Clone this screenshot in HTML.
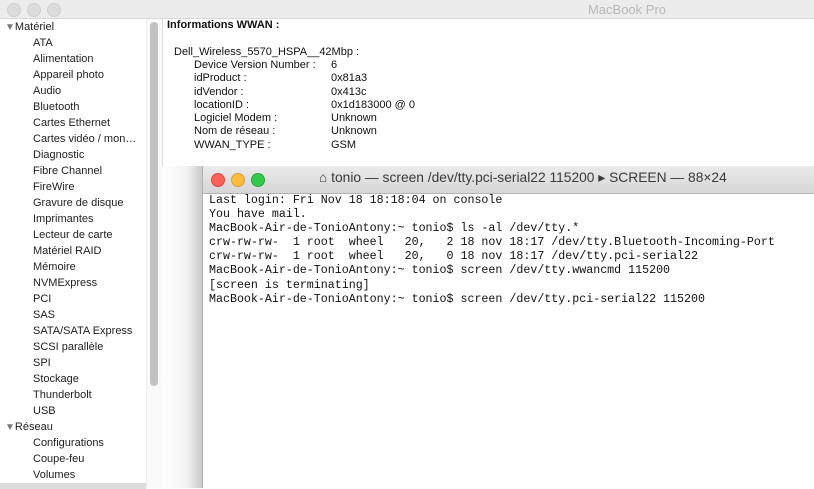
<!DOCTYPE html>
<html><head><meta charset="utf-8"><style>
body{margin:0;width:814px;height:488px;overflow:hidden;position:relative;background:#fff;font-family:"Liberation Sans",sans-serif;}
.tb{position:absolute;left:0;top:0;width:814px;height:18px;background:#ececec;border-bottom:1px solid #d8d8d8;}
.tb .d{position:absolute;top:3px;width:12px;height:12px;border-radius:50%;background:#dcdcdc;border:0.5px solid #d0d0d0;}
.tb .t{position:absolute;left:0;right:0;top:2px;text-align:center;color:#b8b8b8;font-size:13px;padding-left:440px;}
.side{position:absolute;left:0;top:21px;width:146px;height:467px;background:#fff;}
.side div{position:absolute;font-size:11px;color:#222;white-space:nowrap;}
.track{position:absolute;left:146px;top:19px;width:15px;height:469px;background:#fafafa;border-left:1px solid #eee;border-right:1px solid #ddd;}
.thumb{position:absolute;left:150px;top:22px;width:8px;height:364px;background:#c2c2c2;border-radius:4px;}
.info{position:absolute;font-size:11px;color:#111;white-space:nowrap;}
.shadow{position:absolute;left:162px;top:166px;width:41px;height:322px;background:linear-gradient(90deg,#fff 0%,#f2f2f2 60%,#c8c8c8 100%);}
.term{position:absolute;left:202px;top:166px;width:612px;height:322px;background:#fff;border-left:1px solid #b0b0b0;}
.ttb{position:absolute;left:0;top:0;width:612px;height:27px;background:linear-gradient(#ebebeb,#d6d6d6);border-bottom:1px solid #b5b5b5;}
.ttb .c{position:absolute;top:7px;width:12px;height:12px;border-radius:50%;}
.ttb .tt{position:absolute;left:116px;top:4px;font-size:13.8px;color:#3a3a3a;white-space:nowrap;}
pre{position:absolute;left:6px;top:28px;margin:0;font-family:"Liberation Mono",monospace;font-size:11.65px;line-height:14.1px;color:#111;}
</style></head><body>
<div class="tb"><div class="d" style="left:7px"></div><div class="d" style="left:27px"></div><div class="d" style="left:47px"></div><div class="t">MacBook Pro</div></div>
<div class="side">
<div style="left:5px;top:0px"><span style="color:#777;font-size:10px">▼</span>Matériel</div>
<div style="left:33px;top:16px">ATA</div>
<div style="left:33px;top:32px">Alimentation</div>
<div style="left:33px;top:48px">Appareil photo</div>
<div style="left:33px;top:64px">Audio</div>
<div style="left:33px;top:80px">Bluetooth</div>
<div style="left:33px;top:96px">Cartes Ethernet</div>
<div style="left:33px;top:112px">Cartes vidéo / mon…</div>
<div style="left:33px;top:128px">Diagnostic</div>
<div style="left:33px;top:144px">Fibre Channel</div>
<div style="left:33px;top:160px">FireWire</div>
<div style="left:33px;top:176px">Gravure de disque</div>
<div style="left:33px;top:192px">Imprimantes</div>
<div style="left:33px;top:208px">Lecteur de carte</div>
<div style="left:33px;top:224px">Matériel RAID</div>
<div style="left:33px;top:240px">Mémoire</div>
<div style="left:33px;top:256px">NVMExpress</div>
<div style="left:33px;top:272px">PCI</div>
<div style="left:33px;top:288px">SAS</div>
<div style="left:33px;top:304px">SATA/SATA Express</div>
<div style="left:33px;top:320px">SCSI parallèle</div>
<div style="left:33px;top:336px">SPI</div>
<div style="left:33px;top:352px">Stockage</div>
<div style="left:33px;top:368px">Thunderbolt</div>
<div style="left:33px;top:384px">USB</div>
<div style="left:5px;top:400px"><span style="color:#777;font-size:10px">▼</span>Réseau</div>
<div style="left:33px;top:416px">Configurations</div>
<div style="left:33px;top:432px">Coupe-feu</div>
<div style="left:33px;top:448px">Volumes</div>
<div style="left:0;top:462px;width:146px;height:6px;background:#dcdcdc"></div>
</div>
<div class="track"></div><div class="thumb"></div>
<div class="info" style="left:167px;top:19px;font-weight:bold">Informations WWAN :</div>
<div class="info" style="left:174px;top:46px">Dell_Wireless_5570_HSPA__42Mbp :</div>
<div class="info" style="left:194px;top:59px;line-height:13.3px">Device Version Number :<br>idProduct :<br>idVendor :<br>locationID :<br>Logiciel Modem :<br>Nom de réseau :<br>WWAN_TYPE :</div>
<div class="info" style="left:331px;top:59px;line-height:13.3px">6<br>0x81a3<br>0x413c<br>0x1d183000 @ 0<br>Unknown<br>Unknown<br>GSM</div>
<div class="shadow"></div>
<div class="term">
<div class="ttb"><div class="c" style="left:8px;background:#fc605b;border:0.5px solid #de4a45"></div><div class="c" style="left:28px;background:#fdbc40;border:0.5px solid #de9f34"></div><div class="c" style="left:48px;background:#34c84a;border:0.5px solid #27aa35"></div>
<div class="tt">⌂ tonio — screen /dev/tty.pci-serial22 115200 ▸ SCREEN — 88×24</div></div>
<pre>Last login: Fri Nov 18 18:18:04 on console
You have mail.
MacBook-Air-de-TonioAntony:~ tonio$ ls -al /dev/tty.*
crw-rw-rw-  1 root  wheel   20,   2 18 nov 18:17 /dev/tty.Bluetooth-Incoming-Port
crw-rw-rw-  1 root  wheel   20,   0 18 nov 18:17 /dev/tty.pci-serial22
MacBook-Air-de-TonioAntony:~ tonio$ screen /dev/tty.wwancmd 115200
[screen is terminating]
MacBook-Air-de-TonioAntony:~ tonio$ screen /dev/tty.pci-serial22 115200</pre>
</div>
</body></html>
